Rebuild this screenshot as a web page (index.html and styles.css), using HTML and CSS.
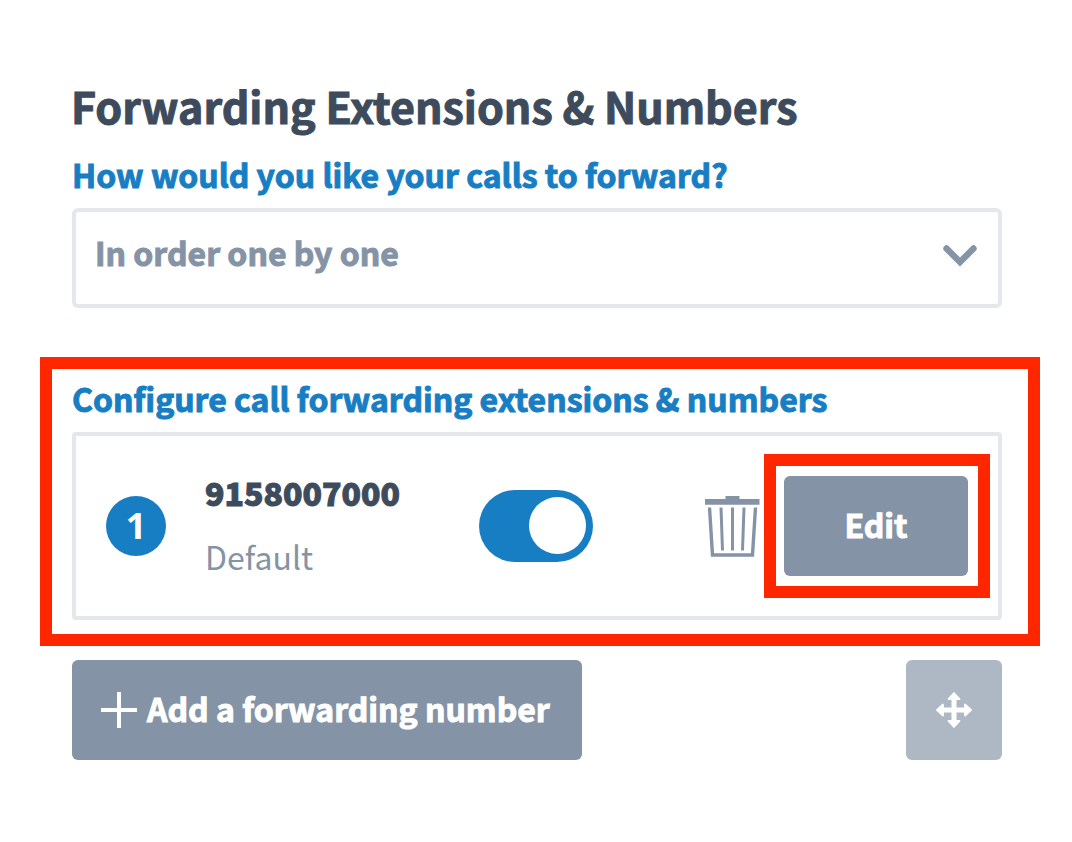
FILE: index.html
```html
<!DOCTYPE html>
<html lang="en">
<head>
<meta charset="utf-8">
<meta name="viewport" content="width=device-width, initial-scale=1">
<title>Forwarding Extensions &amp; Numbers</title>
<link rel="stylesheet" href="styles.css">
</head>
<body>
<main class="page">
  <h1 class="title">Forwarding Extensions &amp; Numbers</h1>
  <div class="field">
    <label class="label" for="order">How would you like your calls to forward?</label>
    <div class="select-wrap">
      <select class="select" id="order">
        <option>In order one by one</option>
      </select>
      <svg class="chevron" viewBox="0 0 34 22" aria-hidden="true"><path d="M3.5 3.5 17 17 30.500 3.500" fill="none" stroke="currentColor" stroke-width="6.400" stroke-linecap="round"/></svg>
    </div>
  </div>

  <section class="highlight" aria-labelledby="configure">
    <h2 class="label" id="configure">Configure call forwarding extensions &amp; numbers</h2>
    <div class="card">
      <span class="badge">1</span>
      <div class="entry">
        <label class="number" for="enabled">9158007000</label>
        <span class="kind">Default</span>
      </div>
      <input class="toggle" id="enabled" type="checkbox" role="switch" checked>
      <button class="trash" type="button" aria-label="Delete">
        <svg class="trash-icon" viewBox="0 0 56 62" aria-hidden="true">
          <path d="M1 4H21.500V1H35.500V4H55.500V9.800H1Z" fill="currentColor"/>
          <path d="M5.500 12.500 8.500 60H48.500L51.500 12.500" fill="none" stroke="currentColor" stroke-width="3.400"/>
          <path d="M17 12.500 18.500 55.500M28.500 12.500V55.500M40 12.500 38.500 55.500" fill="none" stroke="currentColor" stroke-width="3"/>
        </svg>
      </button>
      <div class="edit-frame"><button class="button edit" type="button">Edit</button></div>
    </div>
  </section>

  <div class="actions">
    <button class="button add" type="button">
      <svg class="plus" viewBox="0 0 36 36" aria-hidden="true"><path d="M18 0V36M0 18H36" stroke="currentColor" stroke-width="4"/></svg>
      <span>Add a forwarding number</span>
    </button>
    <button class="button move" type="button" aria-label="Reorder">
      <svg class="move-icon" viewBox="0 0 36 36" aria-hidden="true"><path d="M18 3V33M3 18H33" stroke="currentColor" stroke-width="5"/><path d="M18 1 23.500 7H12.500ZM18 35 12.500 29H23.500ZM1 18 7 12.500V23.500ZM35 18 29 23.500V12.500Z" fill="currentColor" stroke="currentColor" stroke-width="1.800" stroke-linejoin="round"/></svg>
    </button>
  </div>
</main>
</body>
</html>
```
FILE: styles.css
```css
* { box-sizing: border-box; }
body {
  margin: 0;
  background: #fff;
  color: #3d4b5c;
  font-family: "Noto Sans CJK SC", "Open Sans", sans-serif;
  font-size: 32px;
  font-weight: 700;
}
.page { padding: 73px 32px 80px 40px; }
.title,
.label,
.select,
.number,
.button { -webkit-text-stroke: 1px currentColor; }
.title {
  margin: 0 31px;
  font-size: 43px;
  line-height: 64px;
}
.field { padding: 15px 38px 0 32px; }
.label {
  display: block;
  margin: 0 0 12px;
  color: #187ec4;
  font-size: 32px;
  font-weight: 700;
  line-height: 44px;
}
.select-wrap { position: relative; }
.select {
  display: block;
  width: 100%;
  height: 100px;
  padding: 0 60px 12px 19px;
  border: 4px solid #e4e8ed;
  border-radius: 6px;
  background: #fff;
  color: #8593a6;
  font: inherit;
  appearance: none;
}
.chevron {
  position: absolute;
  top: 37px;
  right: 25px;
  width: 34px;
  height: 22px;
  color: #8593a6;
  pointer-events: none;
}
.highlight {
  margin-top: 49px;
  padding: 7px 26px 14px 20px;
  border: 12px solid #ff2600;
}
.card {
  display: flex;
  align-items: center;
  min-height: 188px;
  padding: 0 8px 0 30px;
  border: 4px solid #e4e8ed;
  border-radius: 4px;
}
.badge {
  flex: none;
  width: 60px;
  border-radius: 50%;
  background: #187ec4;
  color: #fff;
  font-family: "Open Sans", sans-serif;
  font-size: 36px;
  line-height: 60px;
  text-align: center;
}
.entry {
  display: flex;
  flex: 1;
  flex-direction: column;
  margin-left: 39px;
  padding-bottom: 4px;
  line-height: 64px;
}
.number { font-weight: 900; }
.kind { color: #8593a6; font-weight: 400; }
.toggle {
  flex: none;
  width: 114px;
  height: 72px;
  margin: 0 111px 0 0;
  padding: 7px;
  border-radius: 36px;
  background: #187ec4;
  appearance: none;
}
.toggle::before {
  display: block;
  width: 57px;
  height: 57px;
  border-radius: 50%;
  background: #fff;
  content: "";
}
.toggle:checked::before { margin-left: auto; }
.trash {
  flex: none;
  margin-right: 4px;
  padding: 0;
  border: 0;
  background: none;
  color: #8593a6;
}
.trash-icon { display: block; width: 56px; height: 62px; }
.edit-frame {
  flex: none;
  padding: 10px 10px 10px 8px;
  border: 12px solid #ff2600;
}
.button {
  display: flex;
  align-items: center;
  justify-content: center;
  height: 100px;
  padding: 0;
  border: 0;
  border-radius: 6px;
  background: #8593a6;
  color: #fff;
  font: inherit;
}
.edit { width: 184px; padding-bottom: 4px; }
.actions {
  display: flex;
  justify-content: space-between;
  padding: 14px 38px 0 32px;
}
.add { gap: 10px; padding: 0 32px 0 29px; }
.add span { padding-bottom: 4px; }
.plus, .move-icon { flex: none; width: 36px; height: 36px; }
.move { width: 96px; background: #aeb8c5; }
```
